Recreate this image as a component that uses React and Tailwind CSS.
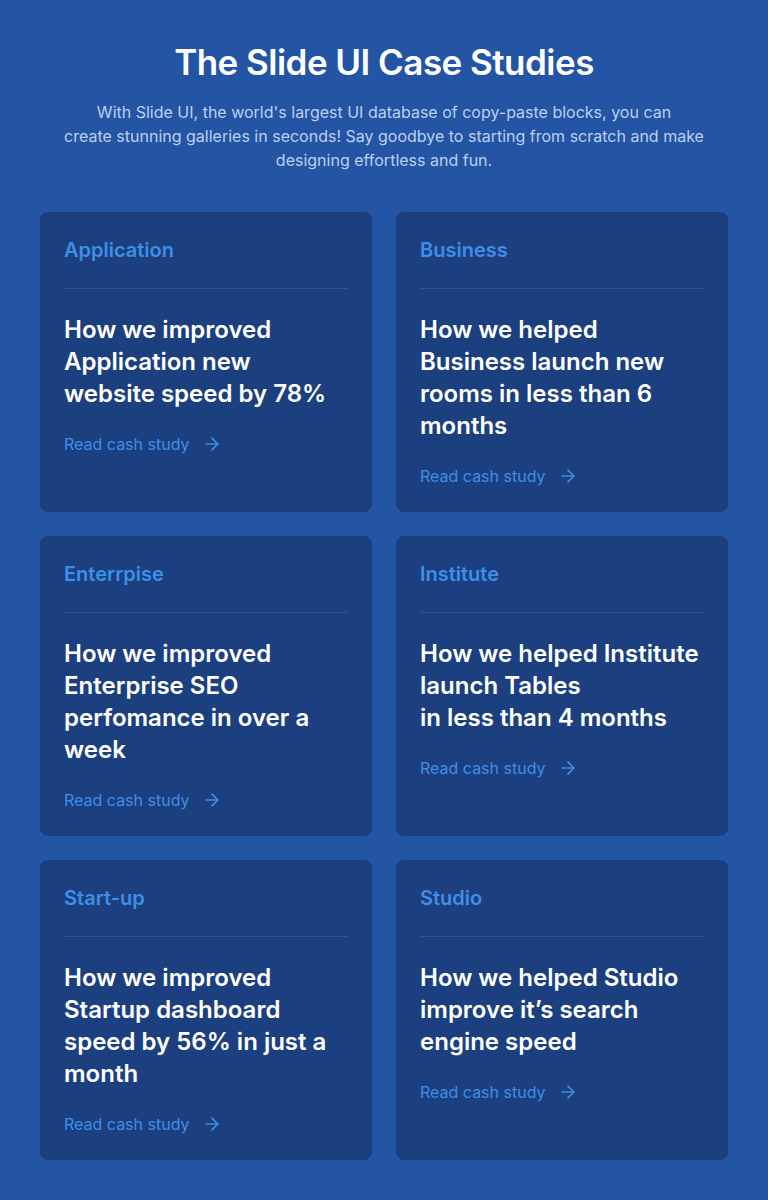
import { ArrowRight } from 'lucide-react';

const STUDIES = [
  { tag: 'Application', title: 'How we improved Application new website speed by 78%' },
  { tag: 'Business', title: 'How we helped Business launch new rooms in less than 6 months' },
  { tag: 'Enterrpise', title: 'How we improved Enterprise SEO perfomance in over a week' },
  { tag: 'Institute', title: ['How we helped Institute launch Tables', 'in less than 4 months'] },
  { tag: 'Start-up', title: 'How we improved Startup dashboard speed by 56% in just a month' },
  { tag: 'Studio', title: 'How we helped Studio improve it’s search engine speed' },
];

function StudyCard({ study }) {
  return (
    <div className="bg-[#1b3f7f] rounded-lg p-6 flex flex-col">
      {/* Tag */}
      <span className="text-xl leading-7 font-semibold text-[#3f8ee8]">{study.tag}</span>
      <div className="h-px bg-[#2b529b] mt-6" />

      {/* Title */}
      <h3 className="mt-[25px] pr-0.5 text-2xl leading-8 font-semibold text-white">
        {Array.isArray(study.title)
          ? study.title.map((line, i) => (
              <span key={i} className="block">
                {line}
              </span>
            ))
          : study.title}
      </h3>

      {/* Link */}
      <a href="#" className="mt-[22px] flex items-center gap-3 text-base leading-6 text-[#3f8ee8]">
        Read cash study
        <ArrowRight size={20} strokeWidth={2} />
      </a>
    </div>
  );
}

export default function App() {
  return (
    <div
      className="min-h-[1200px] bg-[#2454a4] px-10 pt-[42px] pb-10"
      style={{ fontFamily: 'Inter, "Noto Sans", sans-serif' }}
    >
      <div className="text-center">
        <h1 className="text-[35px] leading-10 font-semibold text-white tracking-[-0.015em]">
          The Slide UI Case Studies
        </h1>
        <p className="mt-[18px] mx-auto max-w-[680px] text-base leading-6 text-[#bcd0f2]">
          With Slide UI, the world's largest UI database of copy-paste blocks, you can
          <br />
          create stunning galleries in seconds! Say goodbye to starting from scratch and make designing
          effortless and fun.
        </p>
      </div>

      <div className="mt-10 grid grid-cols-2 gap-6">
        {STUDIES.map((s) => (
          <StudyCard key={s.tag} study={s} />
        ))}
      </div>
    </div>
  );
}
